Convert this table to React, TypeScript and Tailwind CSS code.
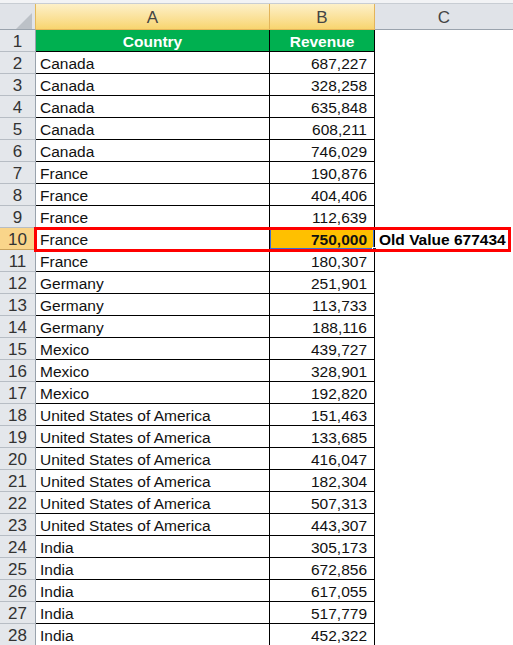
import React from "react";

const data: [string, string][] = [
  ["Canada", "687,227"],
  ["Canada", "328,258"],
  ["Canada", "635,848"],
  ["Canada", "608,211"],
  ["Canada", "746,029"],
  ["France", "190,876"],
  ["France", "404,406"],
  ["France", "112,639"],
  ["France", "750,000"],
  ["France", "180,307"],
  ["Germany", "251,901"],
  ["Germany", "113,733"],
  ["Germany", "188,116"],
  ["Mexico", "439,727"],
  ["Mexico", "328,901"],
  ["Mexico", "192,820"],
  ["United States of America", "151,463"],
  ["United States of America", "133,685"],
  ["United States of America", "416,047"],
  ["United States of America", "182,304"],
  ["United States of America", "507,313"],
  ["United States of America", "443,307"],
  ["India", "305,173"],
  ["India", "672,856"],
  ["India", "617,055"],
  ["India", "517,779"],
  ["India", "452,322"],
];

function RowNum({ n, active }: { n: number; active?: boolean }) {
  return (
    <div
      className={
        "w-[36px] shrink-0 flex items-center justify-center pt-[2px] border-r border-b text-[17px] text-[#333] " +
        (active
          ? "bg-[#f9d58a] border-r-[#e0a93b] border-b-[#c9a25a]"
          : "bg-[#e4e7eb] border-r-[#9aa3ad] border-b-[#b7bdc4]")
      }
    >
      {n}
    </div>
  );
}

export default function App() {
  return (
    <div className="relative w-[513px] h-[645px] overflow-hidden bg-white font-['Liberation_Sans',Arial,sans-serif] text-[15.5px] text-[#111]">
      {/* top strip */}
      <div className="h-[4px] bg-[#f2f3f5] border-b border-[#c8cdd3]" />
      {/* column headers */}
      <div className="flex h-[26px]">
        <div className="w-[36px] shrink-0 relative bg-[#e0e3e8] border-r border-b border-r-[#e3b95a] border-b-[#9aa3ad]">
          <svg className="absolute left-[16px] top-[9px]" width="16" height="16" viewBox="0 0 16 16">
            <polygon points="16,0 16,16 0,16" fill="#bcc1c7" />
          </svg>
        </div>
        <div className="w-[234px] shrink-0 flex items-center justify-center pt-[2px] bg-gradient-to-b from-[#fdf0c8] to-[#f8d56e] border-r border-b border-r-[#e3b45a] border-b-[#e3b45a] text-[#444] text-[17px]">
          A
        </div>
        <div className="w-[105px] shrink-0 flex items-center justify-center pt-[2px] bg-gradient-to-b from-[#fdf0c8] to-[#f8d56e] border-r border-b border-r-[#e3b45a] border-b-[#e3b45a] text-[#444] text-[17px]">
          B
        </div>
        <div className="flex-1 flex items-center justify-center pt-[2px] bg-[#e0e3e8] border-b border-[#9aa3ad] text-[#444] text-[17px]">
          C
        </div>
      </div>
      {/* header row 1 */}
      <div className="flex h-[22px]">
        <RowNum n={1} />
        <div className="w-[234px] shrink-0 flex items-center justify-center pt-[2px] bg-[#00b050] text-white font-bold border-r border-b border-black">
          Country
        </div>
        <div className="w-[105px] shrink-0 flex items-center justify-center pt-[2px] bg-[#00b050] text-white font-bold border-r border-b border-black">
          Revenue
        </div>
        <div className="flex-1" />
      </div>
      {data.map(([c, v], i) => {
        const n = i + 2;
        const sel = n === 10;
        return (
          <div key={n} className="flex h-[22px]">
            <RowNum n={n} active={sel} />
            <div className="w-[234px] shrink-0 flex items-center pl-[4px] pt-[2px] border-r border-b border-black">
              {c}
            </div>
            <div
              className={
                "relative w-[105px] shrink-0 flex items-center justify-end pr-[7px] pt-[2px] border-r border-b border-black " +
                (sel ? "bg-[#ffc000] font-bold" : "")
              }
            >
              {v}
              {sel && (
                <>
                  <div className="absolute inset-[0px] border border-[#3b6fd6]" />
                  <div className="absolute right-[-3px] bottom-[-3px] w-[5px] h-[5px] bg-[#1a2f5a] border border-white" />
                </>
              )}
            </div>
            <div className="flex-1 flex items-center pl-[4px] pt-[2px] font-bold text-black">
              {sel ? "Old Value 677434" : ""}
            </div>
          </div>
        );
      })}
      {/* annotation box */}
      <div className="absolute left-[34px] top-[227px] w-[477px] h-[25px] border-[3px] border-[#ff0000] pointer-events-none" />
    </div>
  );
}
